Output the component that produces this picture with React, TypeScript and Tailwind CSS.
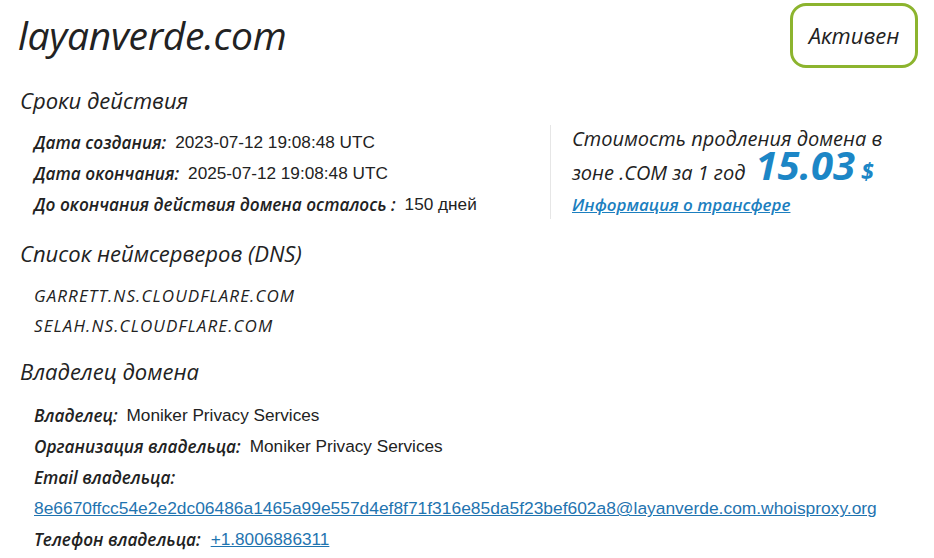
import React from 'react';

const head = "font-['Open_Sans',sans-serif] italic";
const val = "font-['Liberation_Sans',Arial,sans-serif] not-italic";

const Row = ({ label, children }: { label: string; children?: React.ReactNode }) => (
  <div className="flex h-[31px] items-center text-[17.2px] text-[#222]">
    <span className={`${head} font-semibold`}>{label}</span>
    {children && <span className={`${val} ml-[9px]`}>{children}</span>}
  </div>
);

export default function App() {
  return (
    <div className="h-[558px] w-[934px] overflow-hidden bg-white text-[#222]">
      <div className="flex items-start justify-between pl-[18px] pr-[16px] pt-[3px]">
        <h1 className={`${head} mt-[10px] text-[39px] leading-[44px] font-medium tracking-[-0.3px]`}>layanverde.com</h1>
        <div className="flex h-[65px] w-[128px] items-center justify-center rounded-[16px] border-[3px] border-[#8cb42e]">
          <span className={`${head} text-[22px]`}>Активен</span>
        </div>
      </div>

      <h2 className={`${head} mt-[18px] pl-[20px] text-[22px] leading-[28px]`}>Сроки действия</h2>

      <div className="mt-[13px] flex">
        <div className="w-[550px] pl-[34px]">
          <Row label="Дата создания:">2023-07-12 19:08:48 UTC</Row>
          <Row label="Дата окончания:">2025-07-12 19:08:48 UTC</Row>
          <Row label="До окончания действия домена осталось :">150 дней</Row>
        </div>
        <div className="-mt-[2px] flex h-[94px] flex-col border-l border-[#e6e6e6] pl-[21px]">
          <p className={`${head} text-[20px] leading-[28px] font-medium`}>Стоимость продления домена в</p>
          <p className={`${head} -mt-[3px] flex h-[36px] items-baseline text-[20px] leading-[32px] font-medium`}>
            зоне .COM за 1 год
            <span className="ml-[10px] text-[40px] leading-[30px] font-bold text-[#1c86c6]">15.03</span>
            <span className="ml-[6px] text-[23px] leading-[24px] font-bold text-[#1c86c6]">$</span>
          </p>
          <a href="#" className={`${head} mt-[6px] text-[17px] leading-[26px] font-semibold text-[#1c7fbf] underline`}>
            Информация о трансфере
          </a>
        </div>
      </div>

      <h2 className={`${head} mt-[19px] pl-[20px] text-[22px] leading-[28px]`}>Список неймсерверов (DNS)</h2>
      <div className={`${head} mt-[14px] pl-[34px] text-[17px] leading-[30px] tracking-[1.1px]`}>
        <div>GARRETT.NS.CLOUDFLARE.COM</div>
        <div>SELAH.NS.CLOUDFLARE.COM</div>
      </div>

      <h2 className={`${head} mt-[16px] pl-[20px] text-[22px] leading-[28px]`}>Владелец домена</h2>
      <div className="mt-[15px] pl-[34px]">
        <Row label="Владелец:">Moniker Privacy Services</Row>
        <Row label="Организация владельца:">Moniker Privacy Services</Row>
        <Row label="Email владельца:" />
        <div className="flex h-[31px] items-center">
          <a href="#" className={`${val} text-[17.4px] text-[#1f74b0] underline`}>
            8e6670ffcc54e2e2dc06486a1465a99e557d4ef8f71f316e85da5f23bef602a8@layanverde.com.whoisproxy.org
          </a>
        </div>
        <div className="flex h-[31px] items-center text-[17.2px]">
          <span className={`${head} font-semibold`}>Телефон владельца:</span>
          <a href="#" className={`${val} ml-[10px] text-[#1f74b0] underline`}>+1.8006886311</a>
        </div>
      </div>
    </div>
  );
}
